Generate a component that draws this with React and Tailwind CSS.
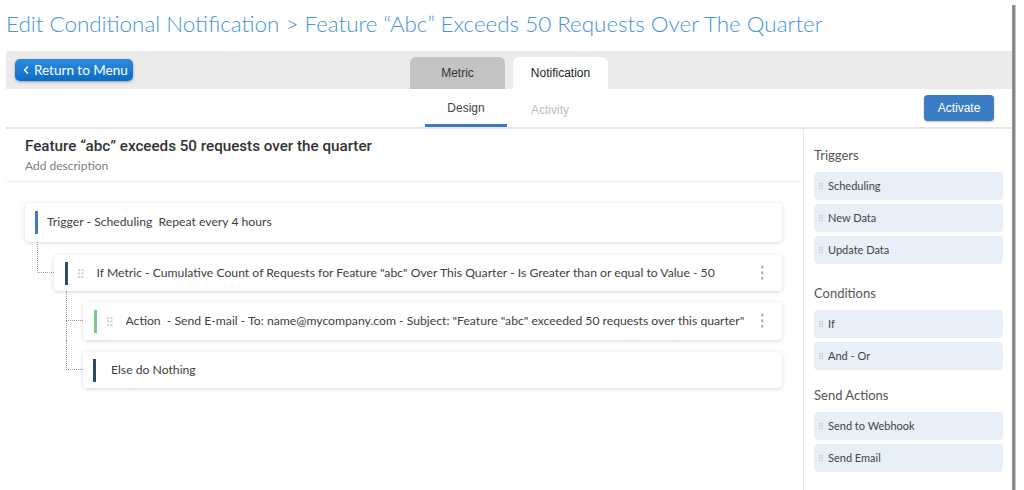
import { ChevronLeft } from 'lucide-react';

const lato = { fontFamily: 'Lato, "Noto Sans", sans-serif' };

function Grip({ small }) {
  const s = small ? 1.5 : 2;
  const g = small ? 1 : 1.5;
  const dots = [];
  for (let r = 0; r < 3; r++) {
    for (let c = 0; c < 2; c++) {
      dots.push(<rect key={`${r}${c}`} x={c * (s + g)} y={r * (s + g)} width={s} height={s} />);
    }
  }
  return (
    <svg width={2 * s + g} height={3 * s + 2 * g} className="shrink-0" fill={small ? '#c4c8cc' : '#d0d0d0'}>
      {dots}
    </svg>
  );
}

function Dots() {
  return (
    <svg width="4" height="14" className="shrink-0" fill="#b5b5b5">
      <rect x="1" y="0" width="2.5" height="2.5" />
      <rect x="1" y="5.5" width="2.5" height="2.5" />
      <rect x="1" y="11" width="2.5" height="2.5" />
    </svg>
  );
}

function Card({ bar, grip, text, menu, h, barPad, textGap }) {
  return (
    <div
      className={`flex items-center bg-white rounded-sm shadow-[0_1px_4px_rgba(0,0,0,0.16)] pr-[18px] ${h} ${barPad}`}
    >
      <div className={`w-[3px] h-[23px] shrink-0 ${bar}`} />
      {grip && (
        <div className="ml-[10px] mr-[13px]">
          <Grip />
        </div>
      )}
      <div className={`flex-1 min-w-0 overflow-hidden text-[12.2px] text-[#404040] whitespace-nowrap ${grip ? '' : textGap}`}>
        {text}
      </div>
      {menu && <Dots />}
    </div>
  );
}

function Branch({ padTop, half, last, children }) {
  return (
    <div className="flex">
      <div className="w-[17px] shrink-0 flex flex-col">
        <div
          className="border-l border-b border-dotted border-[#999]"
          style={{ height: padTop + half }}
        />
        {!last && <div className="flex-1 border-l border-dotted border-[#999]" />}
      </div>
      <div className="flex-1 min-w-0 flex flex-col" style={{ paddingTop: padTop }}>
        {children}
      </div>
    </div>
  );
}

function Section({ title, items, pad }) {
  return (
    <div className={pad}>
      <div className="text-[13px] leading-[20px] text-[#555] mb-[7px]">{title}</div>
      <div className="flex flex-col gap-[4px]">
        {items.map((it) => (
          <div key={it} className="h-[28px] bg-[#e7eff8] rounded-sm flex items-center pl-[5px] gap-[5px]">
            <Grip small />
            <span className="text-[11px] text-[#444]">{it}</span>
          </div>
        ))}
      </div>
    </div>
  );
}

export default function App() {
  return (
    <div className="w-[1024px] h-[490px] bg-white flex overflow-hidden" style={lato}>
      <div className="w-[6px] shrink-0" />
      <div className="w-[1006px] shrink-0 flex flex-col">
        <div className="h-[51px] flex items-center pb-[3px]">
          <h1 className="text-[22.4px] font-light text-[#4494de] whitespace-nowrap leading-none">
            Edit Conditional Notification &gt; Feature “Abc” Exceeds 50 Requests Over The Quarter
          </h1>
        </div>

        <div className="h-[38px] bg-[#ebebeb] grid grid-cols-[1fr_auto_1fr]">
          <div className="flex items-start pt-[8px] pl-[9px]">
            <button className="h-[22px] w-[118px] flex items-center gap-[2px] pl-[5px] rounded-[5px] bg-gradient-to-b from-[#2a8ce0] to-[#0b6cc5] text-white text-[13.5px] whitespace-nowrap shadow-[0_1px_3px_rgba(0,0,0,0.35)]">
              <ChevronLeft size={12} strokeWidth={3} />
              <span>Return to Menu</span>
            </button>
          </div>
          <div className="flex items-end gap-[8px]" style={{ fontFamily: '"Liberation Sans", Arial, sans-serif' }}>
            <div className="w-[95px] h-[32px] bg-[#c3c3c3] rounded-t-md flex items-center justify-center text-[12px] text-[#333]">
              Metric
            </div>
            <div className="w-[95px] h-[32px] bg-white rounded-t-md flex items-center justify-center text-[12px] text-[#222]">
              Notification
            </div>
          </div>
          <div />
        </div>

        <div
          className="h-[40px] grid grid-cols-[1fr_auto_1fr] border-b-2 border-[#e6e6e6]"
          style={{ fontFamily: '"Liberation Sans", Arial, sans-serif' }}
        >
          <div />
          <div className="flex">
            <div className="w-[82px] flex items-center justify-center text-[12px] text-[#444] border-b-[3px] border-[#3b7dc4] pt-[3px]">
              Design
            </div>
            <div className="w-[86px] flex items-center justify-center text-[12px] text-[#b5bfca] pt-[3px]">
              Activity
            </div>
          </div>
          <div className="flex justify-end items-start pt-[6px] pr-[18px]">
            <button className="w-[70px] h-[26px] bg-[#3b7dc4] rounded-sm text-white text-[12px] shadow-[0_1px_2px_rgba(0,0,0,0.25)]">
              Activate
            </button>
          </div>
        </div>

        <div className="flex-1 flex">
          <div className="w-[797px] shrink-0 flex flex-col">
            <div className="px-[19px] pt-[7px] h-[53px] border-b border-[#eeeeee]">
              <div
                className="text-[15.2px] font-medium text-[#333] leading-[20px]"
                style={{ fontFamily: 'Roboto, "Noto Sans", sans-serif' }}
              >
                Feature “abc” exceeds 50 requests over the quarter
              </div>
              <div className="text-[12px] text-[#808080] leading-[18px] mt-[1px]">Add description</div>
            </div>

            <div className="pl-[19px] pr-[21px] pt-[21px]">
              <Card
                bar="bg-[#3b7cc4]"
                h="h-[39px]"
                barPad="pl-[10px]"
                textGap="ml-[9px]"
                text={'Trigger - Scheduling\u00a0 Repeat every 4 hours'}
              />
              <div className="ml-[12px]">
                <Branch padTop={13} half={18} last>
                  <Card
                    bar="bg-[#2c4a6e]"
                    h="h-[36px]"
                    barPad="pl-[11px]"
                    grip
                    menu
                    text={'If Metric - Cumulative Count of Requests for Feature "abc" Over This Quarter - Is Greater than or equal to Value - 50'}
                  />
                  <div className="ml-[12px]">
                    <Branch padTop={11} half={19}>
                      <Card
                        bar="bg-[#7cc68a]"
                        h="h-[38px]"
                        barPad="pl-[11px]"
                        grip
                        menu
                        text={'Action\u00a0 - Send E-mail - To: name@mycompany.com - Subject: "Feature "abc" exceeded 50 requests over this quarter"'}
                      />
                    </Branch>
                    <Branch padTop={12} half={18} last>
                      <Card
                        bar="bg-[#2c4a6e]"
                        h="h-[36px]"
                        barPad="pl-[10px]"
                        textGap="ml-[15px]"
                        text="Else do Nothing"
                      />
                    </Branch>
                  </div>
                </Branch>
              </div>
            </div>
          </div>

          <div className="flex-1 border-l border-[#e8e8e8] pl-[10px] pr-[9px]">
            <Section pad="pt-[16px]" title="Triggers" items={['Scheduling', 'New Data', 'Update Data']} />
            <Section pad="pt-[19px]" title="Conditions" items={['If', 'And - Or']} />
            <Section pad="pt-[15px]" title="Send Actions" items={['Send to Webhook', 'Send Email']} />
          </div>
        </div>
      </div>
      <div className="w-[4px] shrink-0 mt-[5px] bg-gradient-to-r from-[#9a9a9a] via-[#7a7a7a] to-[#d8d8d8]" />
    </div>
  );
}
